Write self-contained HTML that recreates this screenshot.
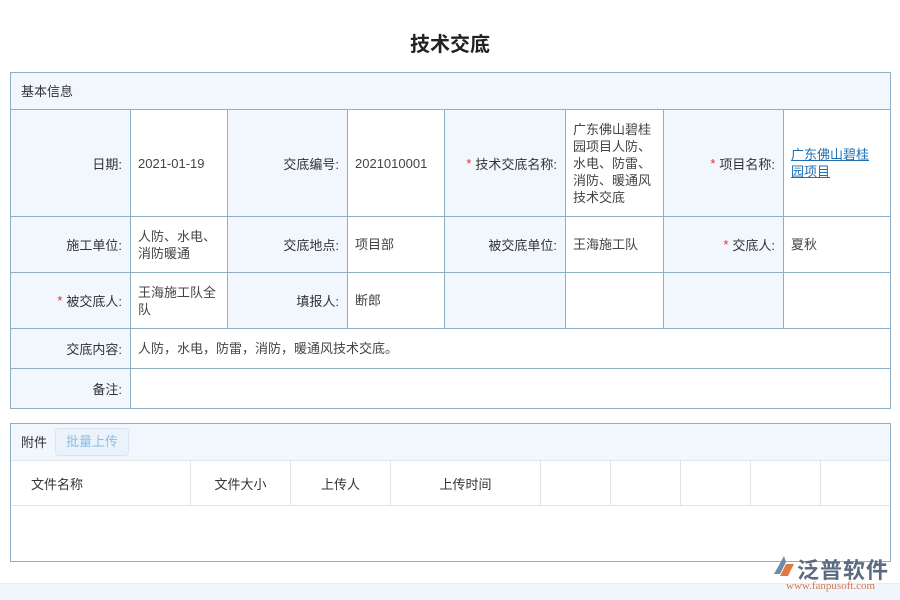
<!DOCTYPE html>
<html><head><meta charset="utf-8"><style>
body{margin:0;width:900px;height:600px;background:#fff;position:relative;overflow:hidden;font-family:"Liberation Sans","Noto Sans CJK SC",sans-serif;font-size:13px;color:#333}
.a{position:absolute;box-sizing:border-box}
.l{background:#f1f7fd;text-align:right;padding-right:8px;display:flex;align-items:center;justify-content:flex-end;border-right:1px solid #8fb0c4;border-bottom:1px solid #8fb0c4}
.v{display:flex;align-items:center;padding-left:7px;border-right:1px solid #8fb0c4;border-bottom:1px solid #8fb0c4;line-height:17px;color:#444}
.s{color:#e0312f;margin-right:4px}
.th{box-sizing:border-box;flex-shrink:0;display:flex;align-items:center;justify-content:center;border-right:1px solid #e3e3e3;color:#333}
</style></head><body>
<div class="a" style="left:0;top:28px;width:900px;text-align:center;font-size:20px;font-weight:bold;color:#222">技术交底</div>
<div class="a" style="left:10px;top:72px;width:881px;height:337px;border:1px solid #8fb0c4"></div>
<div class="a" style="left:11px;top:73px;width:879px;height:37px;background:#f1f7fd;border-bottom:1px solid #8fb0c4;padding:8px 0 0 10px">基本信息</div>
<div class="a l" style="left:11px;top:110px;width:120px;height:107px">日期:</div>
<div class="a v" style="left:131px;top:110px;width:97px;height:107px">2021-01-19</div>
<div class="a l" style="left:228px;top:110px;width:120px;height:107px">交底编号:</div>
<div class="a v" style="left:348px;top:110px;width:97px;height:107px">2021010001</div>
<div class="a l" style="left:445px;top:110px;width:121px;height:107px"><span class="s">*</span>技术交底名称:</div>
<div class="a v" style="left:566px;top:110px;width:98px;height:107px;padding-right:8px">广东佛山碧桂园项目人防、水电、防雷、消防、暖通风技术交底</div>
<div class="a l" style="left:664px;top:110px;width:120px;height:107px"><span class="s">*</span>项目名称:</div>
<div class="a v" style="left:784px;top:110px;width:106px;height:107px;color:#1f6fb2;text-decoration:underline;padding-right:14px;border-right:none">广东佛山碧桂园项目</div>
<div class="a l" style="left:11px;top:217px;width:120px;height:56px">施工单位:</div>
<div class="a v" style="left:131px;top:217px;width:97px;height:56px;padding-right:10px">人防、水电、消防暖通</div>
<div class="a l" style="left:228px;top:217px;width:120px;height:56px">交底地点:</div>
<div class="a v" style="left:348px;top:217px;width:97px;height:56px">项目部</div>
<div class="a l" style="left:445px;top:217px;width:121px;height:56px">被交底单位:</div>
<div class="a v" style="left:566px;top:217px;width:98px;height:56px">王海施工队</div>
<div class="a l" style="left:664px;top:217px;width:120px;height:56px"><span class="s">*</span>交底人:</div>
<div class="a v" style="left:784px;top:217px;width:106px;height:56px;border-right:none">夏秋</div>
<div class="a l" style="left:11px;top:273px;width:120px;height:56px"><span class="s">*</span>被交底人:</div>
<div class="a v" style="left:131px;top:273px;width:97px;height:56px;padding-right:8px">王海施工队全队</div>
<div class="a l" style="left:228px;top:273px;width:120px;height:56px">填报人:</div>
<div class="a v" style="left:348px;top:273px;width:97px;height:56px">断郎</div>
<div class="a l" style="left:445px;top:273px;width:121px;height:56px"></div>
<div class="a v" style="left:566px;top:273px;width:98px;height:56px"></div>
<div class="a l" style="left:664px;top:273px;width:120px;height:56px"></div>
<div class="a v" style="left:784px;top:273px;width:106px;height:56px;border-right:none"></div>
<div class="a l" style="left:11px;top:329px;width:120px;height:40px">交底内容:</div>
<div class="a v" style="left:131px;top:329px;width:759px;height:40px;border-right:none">人防，水电，防雷，消防，暖通风技术交底。</div>
<div class="a l" style="left:11px;top:369px;width:120px;height:39px;border-bottom:none">备注:</div>
<div class="a" style="left:10px;top:423px;width:881px;height:139px;border:1px solid #8fb0c4"></div>
<div class="a" style="left:11px;top:424px;width:879px;height:37px;background:#f1f7fd;border-bottom:1px solid #e0e6ea"></div>
<div class="a" style="left:21px;top:432px">附件</div>
<div class="a" style="left:55px;top:428px;width:74px;height:28px;border:1px solid #d8e6f2;border-radius:4px;background:#eaf3fb;color:#8fbde0;text-align:center;line-height:26px">批量上传</div>
<div class="a" style="left:11px;top:461px;width:879px;height:45px;border-bottom:1px solid #e3e3e3;display:flex">
<div class="th" style="width:180px;justify-content:flex-start;padding-left:20px">文件名称</div>
<div class="th" style="width:100px">文件大小</div>
<div class="th" style="width:100px">上传人</div>
<div class="th" style="width:150px">上传时间</div>
<div class="th" style="width:70px"></div><div class="th" style="width:70px"></div><div class="th" style="width:70px"></div><div class="th" style="width:70px"></div><div class="th" style="width:69px;border:none"></div>
</div>
<div class="a" style="left:0;top:583px;width:900px;height:17px;background:#f1f6fc;border-top:1px solid #e6ecf2"></div>
<svg class="a" style="left:770px;top:554px" width="28" height="26" viewBox="0 0 28 26"><path d="M14 2 L4 20 L10 20 L16 8 Z" fill="#6f8aa8"/><path d="M16 10 L24 10 L18 22 L10 22 Z" fill="#e07a45"/></svg>
<div class="a" style="left:797px;top:553px;font-size:22px;color:#5a6b82;font-weight:bold;letter-spacing:1px">泛普软件</div>
<div class="a" style="left:786px;top:580px;font-family:'Liberation Serif',serif;font-size:11px;color:#d07a55">www.fanpusoft.com</div>
</body></html>
